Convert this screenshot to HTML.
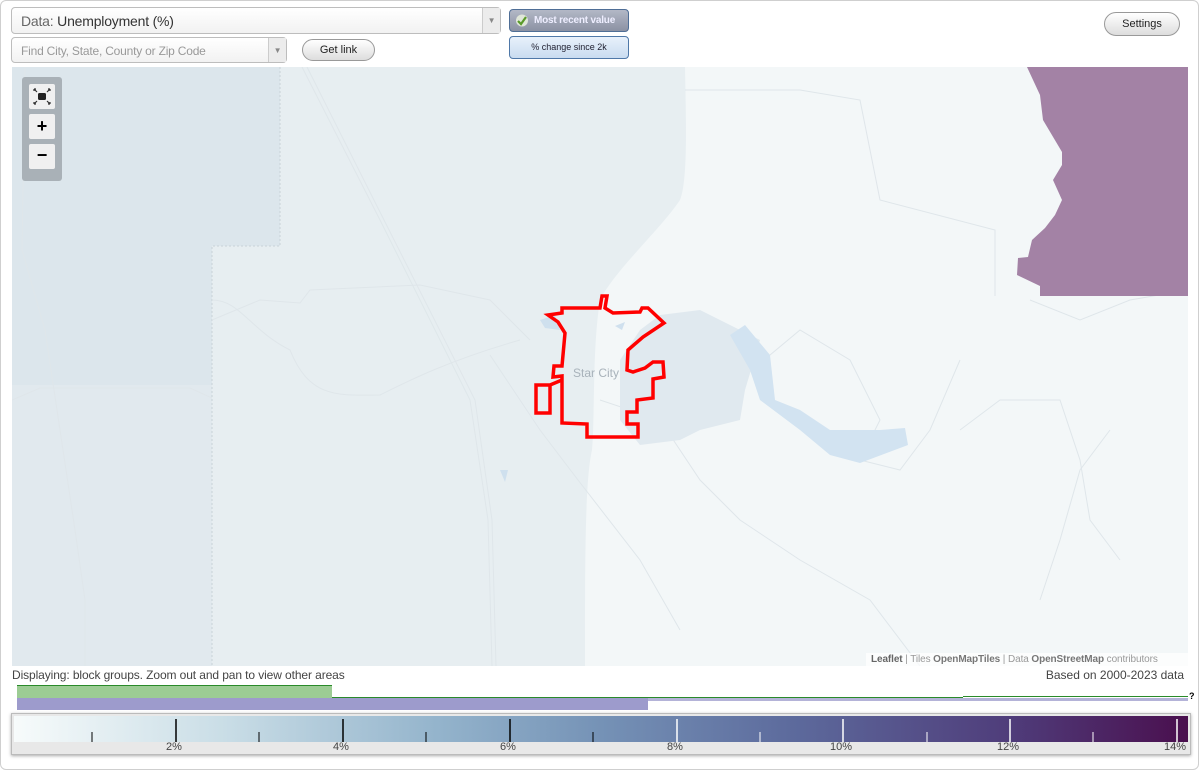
<!DOCTYPE html>
<html><head><meta charset="utf-8"><style>
*{box-sizing:border-box;margin:0;padding:0}
body{width:1200px;height:771px;background:#fff;font-family:"Liberation Sans",Arial,sans-serif;position:relative;overflow:hidden}
.frame{position:absolute;left:0;top:0;width:1199px;height:770px;border:1px solid #cfcfcf;border-radius:6px}
.sel{position:absolute;background:linear-gradient(#fff,#f2f2f2);border:1px solid #bdbdbd;border-radius:4px;font-size:14px;color:#333}
.sel .arr{position:absolute;right:0;top:0;bottom:0;width:18px;border-left:1px solid #ccc;background:#ececec;color:#888;font-size:8px;text-align:center}
.btn{position:absolute;border:1px solid #999;border-radius:12px;background:linear-gradient(#fff,#ddd);font-size:11px;text-align:center;color:#222}
.abs{position:absolute}
</style></head><body>
<div class="frame"></div>
<div class="sel" style="left:11px;top:7px;width:490px;height:27px;padding:5px 9px;font-size:14px;letter-spacing:-0.2px"><span style="color:#666">Data:</span> Unemployment (%)<div class="arr" style="line-height:26px">▼</div></div>
<div class="sel" style="left:11px;top:37px;width:276px;height:26px;padding:6px 9px;font-size:12px;color:#999;letter-spacing:-0.2px">Find City, State, County or Zip Code<div class="arr" style="line-height:25px">▼</div></div>
<div class="btn" style="left:302px;top:39px;width:73px;height:22px;line-height:20px">Get link</div>
<div class="abs" style="left:509px;top:9px;width:120px;height:23px;border:1px solid #4f6e96;border-radius:4px;background:linear-gradient(#b3b8c6,#8b91a3);color:#eef;font-size:10px;font-weight:bold;line-height:21px;padding-left:24px;letter-spacing:-0.2px">Most recent value
<svg class="abs" style="left:5px;top:4px" width="14" height="13" viewBox="0 0 14 13"><circle cx="7" cy="6.5" r="6" fill="#dfe6d8"/><path d="M3 7l3 3 5-7" stroke="#5a9a2a" stroke-width="2.2" fill="none"/></svg></div>
<div class="abs" style="left:509px;top:36px;width:120px;height:23px;border:1px solid #4f78a8;border-radius:4px;background:linear-gradient(#e8f1fb,#c9dcf0);color:#223;font-size:9px;line-height:21px;text-align:center">% change since 2k</div>
<div class="btn" style="left:1104px;top:12px;width:76px;height:24px;line-height:22px;font-size:11px">Settings</div>

<svg class="abs" style="left:12px;top:67px" width="1176" height="599" viewBox="12 67 1176 599">
<rect x="12" y="67" width="1176" height="599" fill="#f3f7f8"/>
<path d="M12 67H685C686 120 688 180 680 200 660 230 615 270 600 300 592 350 595 420 592 450 585 480 585 560 585 666H12Z" fill="#e7eef1"/>
<path d="M12 67H280V246H212V385H12Z" fill="#dce6ec"/>
<path d="M12 385H212V666H12Z" fill="#e1e9ee"/>
<path d="M280 67V246H212V666" stroke="#c8d2d8" stroke-dasharray="2 2" fill="none"/>
<g stroke="#dfe6ea" stroke-width="1" fill="none">
<path d="M302 67L380 220 470 400 488 520 492 666"/><path d="M307 67L384 220 475 400 492 520 496 666"/>
<path d="M25 67 22 250 45 330 60 430 75 530 85 600 85 666"/>
<path d="M12 400 40 388 190 388 212 398"/>
<path d="M212 320 260 300 300 303 310 290 420 285 490 300 530 340"/>
<path d="M212 300C240 300 250 330 290 350 310 400 340 395 380 395 410 380 450 360 520 340"/>
<path d="M490 355 540 430 578 480 640 560 680 630"/>
<path d="M600 400 660 420 700 480 740 520 800 560 870 600 920 666"/>
<path d="M700 400 740 380 800 330 850 360 880 420 860 460 900 470 930 430 960 360"/>
<path d="M960 430 1000 400 1060 400 1080 460 1090 520 1120 560"/>
<path d="M1110 430 1080 470 1060 540 1040 600"/>
<path d="M685 90 800 90 860 100 880 200 995 230 995 296"/>
<path d="M1030 300 1080 320 1130 300 1188 290"/>
</g>
<path d="M1027 67L1040 95 1043 120 1062 152 1062 165 1053 180 1062 200 1055 215 1045 228 1032 240 1028 257 1018 258 1017 275 1040 286 1040 296H1188V67Z" fill="#a382a5"/>
<path d="M640 330 660 315 700 310 720 320 760 340 745 390 740 420 700 430 680 440 640 445 620 420 620 360Z" fill="#e0e9ef"/>
<path d="M730 335 745 325 770 355 775 400 800 410 830 430 880 430 905 428 908 445 860 463 830 455 800 430 760 400 750 370Z" fill="#d2e3f1"/>
<path d="M540 320 555 315 560 330 545 328Z M615 326 625 322 622 330Z M500 470 508 470 505 482Z" fill="#cfe0ee"/>
<text x="573" y="377" font-family="Liberation Sans,sans-serif" font-size="12" fill="#a8b2ba">Star City</text>
<path d="M562 308H600L602 296H607L605 308 613 313 640 312 642 308H648L664 323 643 337 628 350 627 370 633 372 645 368 653 362H663L664 377 653 379 653 398 637 400 637 412 627 412 627 424 638 424 638 437H587V424L562 423V376L553 377 554 366H562L565 333 558 322 548 315 562 313Z" fill="none" stroke="#f00" stroke-width="3.5" stroke-linejoin="miter"/>
<path d="M536 385H550V413H536Z M550 385 562 380" fill="none" stroke="#f00" stroke-width="3.5"/>
</svg>
<div class="abs" style="left:22px;top:77px;width:40px;height:104px;background:#a9b1b7;border-radius:3px"></div>
<div class="abs" style="left:29px;top:84px;width:26px;height:25px;background:#f0f0f0;border-radius:2px">
<svg class="abs" style="left:4px;top:4px" width="18" height="17" viewBox="0 0 18 17"><rect x="5" y="5" width="8" height="7" rx="1.5" fill="#222"/><path d="M1 1l3 3M17 1l-3 3M1 16l3-3M17 16l-3-3M1 1h2M1 1v2M17 1h-2M17 1v2M1 16h2M1 16v-2M17 16h-2M17 16v-2" stroke="#333" stroke-width="1.2" fill="none"/></svg></div>
<div class="abs" style="left:29px;top:114px;width:26px;height:25px;background:#f0f0f0;border-radius:2px;font-weight:bold;font-size:18px;text-align:center;line-height:24px">+</div>
<div class="abs" style="left:29px;top:144px;width:26px;height:25px;background:#f0f0f0;border-radius:2px;font-weight:bold;font-size:18px;text-align:center;line-height:22px">−</div>
<div class="abs" style="left:866px;top:653px;width:322px;height:13px;background:rgba(255,255,255,.7);font-size:10px;color:#999;padding-left:5px;line-height:13px;letter-spacing:-0.1px"><b style="color:#666">Leaflet</b> | Tiles <b style="color:#777">OpenMapTiles</b> | Data <b style="color:#777">OpenStreetMap</b> contributors</div>
<div class="abs" style="left:12px;top:668px;font-size:12px;color:#444;letter-spacing:-0.1px">Displaying: block groups. Zoom out and pan to view other areas</div>
<div class="abs" style="right:16px;top:668px;font-size:12px;color:#444">Based on 2000-2023 data</div>
<div class="abs" style="left:17px;top:685px;width:315px;height:13px;background:#9ccc94;border-top:1px solid #2a8a2a"></div>
<div class="abs" style="left:332px;top:697px;width:631px;height:1px;background:#2a8a2a"></div>
<div class="abs" style="left:963px;top:696px;width:225px;height:1px;background:#2a8a2a"></div>
<div class="abs" style="left:17px;top:698px;width:631px;height:12px;background:#9d9bcc"></div>
<div class="abs" style="left:648px;top:698px;width:540px;height:3px;background:#b4b3d8"></div>
<div class="abs" style="left:1189px;top:691px;font-size:9px;font-weight:bold">?</div>
<div class="abs" style="left:11px;top:713px;width:1180px;height:42px;border:1px solid #bbb;background:#e8e8e8;box-shadow:0 1px 3px #aaa"></div>
<div class="abs" style="left:14px;top:716px;width:1174px;height:26px;background:linear-gradient(90deg,#f7fbfb,#c9dde6 18%,#94b4cc 36%,#7592b6 50%,#5d6b9d 66%,#4f3c7a 85%,#4a0f4e)"></div>
<svg class="abs" style="left:0;top:716px" width="1200" height="26">
<g stroke="#000"><line x1="92" y1="16" x2="92" y2="26"/><line x1="176" y1="3" x2="176" y2="26" stroke-width="1.5"/><line x1="259" y1="16" x2="259" y2="26"/><line x1="343" y1="3" x2="343" y2="26" stroke-width="1.5"/><line x1="426" y1="16" x2="426" y2="26"/><line x1="510" y1="3" x2="510" y2="26" stroke-width="1.5"/><line x1="593" y1="16" x2="593" y2="26"/></g>
<g stroke="#fff"><line x1="677" y1="3" x2="677" y2="26" stroke-width="1.5"/><line x1="760" y1="16" x2="760" y2="26"/><line x1="843" y1="3" x2="843" y2="26" stroke-width="1.5"/><line x1="927" y1="16" x2="927" y2="26"/><line x1="1010" y1="3" x2="1010" y2="26" stroke-width="1.5"/><line x1="1093" y1="16" x2="1093" y2="26"/><line x1="1177" y1="3" x2="1177" y2="26" stroke-width="1.5"/></g>
</svg>
<div class="abs" style="top:741px;left:0;width:1200px;height:13px;font-size:11px;color:#444">
<span class="abs" style="left:166px">2%</span><span class="abs" style="left:333px">4%</span><span class="abs" style="left:500px">6%</span><span class="abs" style="left:667px">8%</span><span class="abs" style="left:830px">10%</span><span class="abs" style="left:997px">12%</span><span class="abs" style="left:1164px">14%</span></div>
</body></html>
